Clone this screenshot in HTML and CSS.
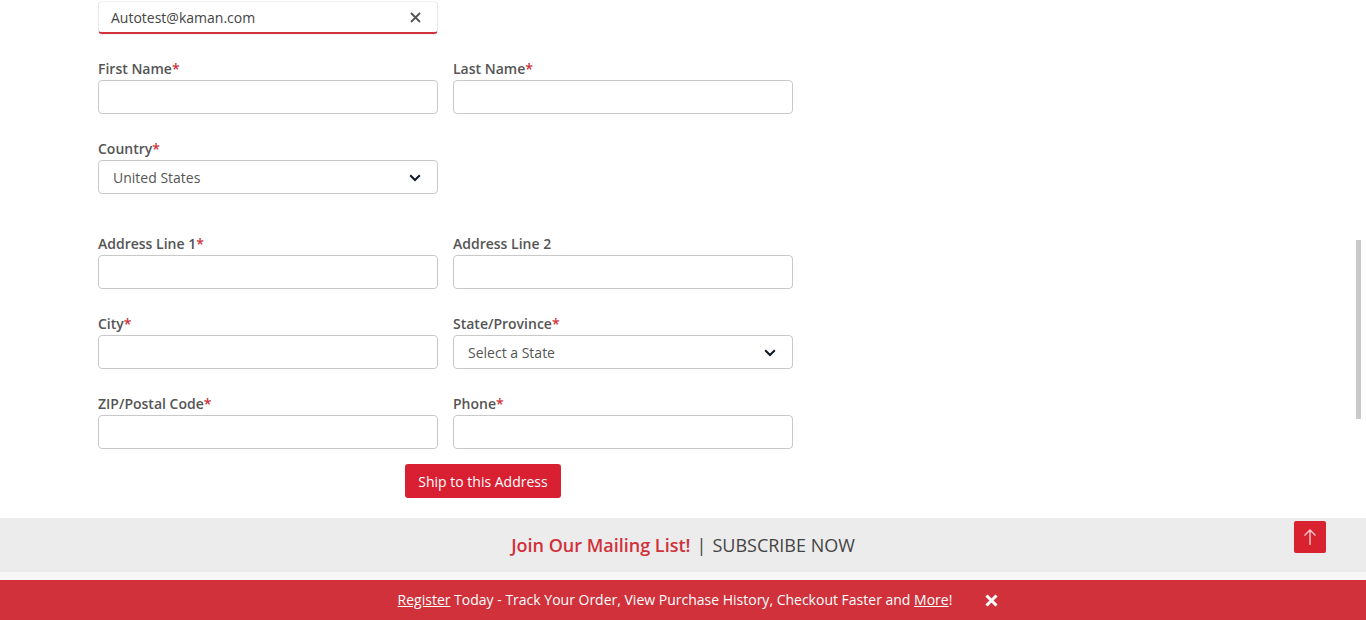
FILE: index.html
```html
<!DOCTYPE html>
<html lang="en">
<head>
<meta charset="utf-8">
<title>Shipping Address</title>
<link rel="stylesheet" href="styles.css">
</head>
<body>
<div class="page">
  <main class="form-area">
    <div class="email-box">
      <span class="email-text">Autotest@kaman.com</span>
      <svg class="email-clear" width="11" height="11" viewBox="0 0 11 11"><path d="M1 1L10 10M10 1L1 10" stroke="#555" stroke-width="1.8" fill="none"/></svg>
    </div>

    <div class="grid row-first">
      <div class="field"><label class="label">First Name<span class="req">*</span></label><div class="input"></div></div>
      <div class="field"><label class="label">Last Name<span class="req">*</span></label><div class="input"></div></div>
    </div>

    <div class="grid">
      <div class="field"><label class="label">Country<span class="req">*</span></label>
        <div class="input select"><span>United States</span>
          <svg width="12" height="8" viewBox="0 0 12 8"><path d="M1.2 1.2L6 6L10.8 1.2" stroke="#111827" stroke-width="2" fill="none"/></svg>
        </div>
      </div>
    </div>

    <div class="grid row-address">
      <div class="field"><label class="label">Address Line 1<span class="req">*</span></label><div class="input"></div></div>
      <div class="field"><label class="label">Address Line 2</label><div class="input"></div></div>
    </div>

    <div class="grid">
      <div class="field"><label class="label">City<span class="req">*</span></label><div class="input"></div></div>
      <div class="field"><label class="label">State/Province<span class="req">*</span></label>
        <div class="input select"><span>Select a State</span>
          <svg width="12" height="8" viewBox="0 0 12 8"><path d="M1.2 1.2L6 6L10.8 1.2" stroke="#111827" stroke-width="2" fill="none"/></svg>
        </div>
      </div>
    </div>

    <div class="grid">
      <div class="field"><label class="label">ZIP/Postal Code<span class="req">*</span></label><div class="input"></div></div>
      <div class="field"><label class="label">Phone<span class="req">*</span></label><div class="input"></div></div>
    </div>

    <div class="actions"><button class="ship-btn">Ship to this Address</button></div>
  </main>

  <section class="mailing">
    <span class="mail-red">Join Our Mailing List!</span><span class="mail-sep">|</span><span class="mail-dark">SUBSCRIBE NOW</span>
    <a class="to-top" href="#">
      <svg width="14" height="18" viewBox="0 0 14 18"><path d="M7 17V2M1.5 7.5L7 2L12.5 7.5" stroke="#f6c9cd" stroke-width="1.4" fill="none"/></svg>
    </a>
  </section>
  <div class="spacer"></div>
  <footer class="register-bar">
    <span class="reg-text"><a href="#">Register</a> Today - Track Your Order, View Purchase History, Checkout Faster and <a href="#">More</a>!</span>
    <svg class="reg-close" width="13" height="13" viewBox="0 0 13 13"><path d="M1.5 1.5L11.5 11.5M11.5 1.5L1.5 11.5" stroke="#fff" stroke-width="3" fill="none"/></svg>
  </footer>
  <div class="scroll-thumb"></div>
</div>
</body>
</html>
```

FILE: styles.css
```css
* { box-sizing: border-box; }
html, body { margin: 0; padding: 0; height: 620px; overflow: hidden; background: #fff; }
body { font-family: "Open Sans", "Liberation Sans", sans-serif; font-size: 14px; color: #555; }
.page { position: relative; height: 620px; display: flex; flex-direction: column; }

.form-area { padding-left: 98px; padding-top: 1px; width: 793px; }

.email-box {
  width: 340px; height: 33px;
  border: 1px solid #e8e8e8; border-top-color: #f0f0f0;
  border-bottom: 2px solid #d0313a;
  border-radius: 4px;
  display: flex; align-items: center; justify-content: space-between;
  padding: 0 16px 0 12px;
  box-shadow: 0 1px 2px rgba(0,0,0,0.06);
}
.email-text { color: #444; font-size: 14px; }

.grid { display: grid; grid-template-columns: 340px 340px; column-gap: 15px; margin-bottom: 24px; }
.row-first { margin-top: 24px; }
.row-address { margin-top: 39px; }
.field { display: flex; flex-direction: column; }
.label { font-weight: 600; line-height: 20px; color: #555; padding-top: 1px; margin-bottom: 1px; }
.req { color: #d0313a; }
.input {
  height: 34px; border: 1px solid #c9c9c9; border-radius: 4px; background: #fff;
}
.select { display: flex; align-items: center; justify-content: space-between; padding: 0 16px 0 14px; color: #555; }
.select svg { margin-top: 1px; }

.actions { display: flex; margin-top: -9px; padding-left: 307px; }
.ship-btn {
  font-family: "Open Sans", "Liberation Sans", sans-serif; font-size: 14px;
  background: #d82032; color: #fff; border: none; border-radius: 3px;
  height: 34px; width: 156px; padding: 0;
}

.mailing {
  position: relative;
  margin-top: 20px; height: 54px; background: #ececec;
  display: flex; align-items: center; justify-content: center;
  font-size: 18px;
}
.mail-red { color: #d0313a; font-weight: 600; }
.mail-sep { color: #444; margin: 0 6px; }
.mail-dark { color: #444; }
.to-top {
  position: absolute; left: 1294px; top: 3px; width: 32px; height: 32px;
  background: #d9222f; border-radius: 2px;
  display: flex; align-items: center; justify-content: center;
}
.spacer { height: 8px; background: #f7f7f7; }
.register-bar {
  height: 40px; background: #d0313a; color: #fff;
  display: flex; align-items: center; justify-content: center;
  padding-left: 30px; padding-bottom: 2px;
}
.reg-text { font-size: 14px; }
.reg-text a { color: #fff; text-decoration: underline; }
.reg-close { margin-left: 33px; margin-top: 2px; }

.scroll-thumb {
  position: absolute; left: 1356px; top: 240px; width: 5px; height: 179px; background: #c9c9c9;
}
```
